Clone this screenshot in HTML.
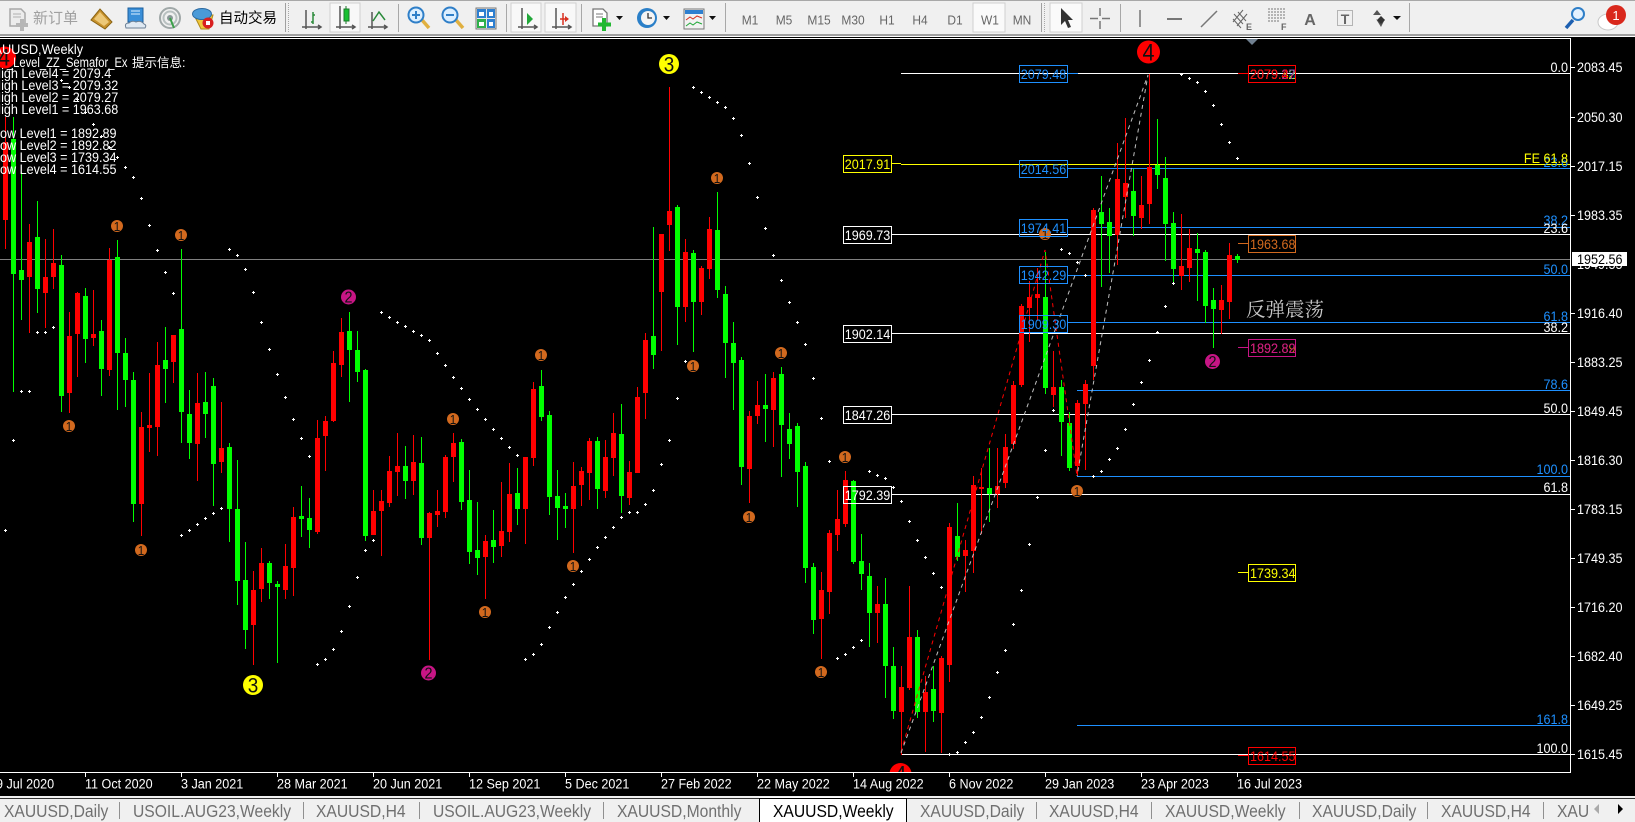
<!DOCTYPE html>
<html lang="zh">
<head>
<meta charset="utf-8">
<title>XAUUSD,Weekly</title>
<style>
html,body{margin:0;padding:0;background:#000;width:1635px;height:822px;overflow:hidden}
svg{display:block;position:absolute;left:0;top:0}
text{font-family:"Liberation Sans","Noto Sans CJK SC",sans-serif}
.s text,.e text,.m text,text.s{transform-box:fill-box;transform:translateY(.5px) scaleX(.9)}
.s text,text.s{transform-origin:0 0}
.e text{transform-origin:100% 0}
.m text{transform-origin:50% 0}
</style>
</head>
<body>
<svg xmlns="http://www.w3.org/2000/svg" width="1635" height="822" viewBox="0 0 1635 822">
<defs>
<marker id="p" markerUnits="userSpaceOnUse" markerWidth="3" markerHeight="3" refX="1.5" refY="1.5"><path d="M1 0h1v1h1v1h-1v1h-1v-1h-1v-1h1z" fill="#fff"/></marker>
<clipPath id="ca"><rect x="0" y="39" width="1570" height="733"/></clipPath>
</defs>
<rect width="1635" height="822" fill="#000"/>

<!-- toolbar -->
<rect width="1635" height="34" fill="#f0f0f0"/>
<rect width="1635" height="1" fill="#a8a8a8"/>
<rect y="34" width="1635" height="2" fill="#a0a0a0"/>
<rect y="36" width="1635" height="1" fill="#fff"/>

<!-- new order -->
<g>
<path d="M10 9h11l4 4v13H10z" fill="#ececec" stroke="#a8a8a8" stroke-width="1.5"/>
<path d="M13 14h8M13 17h8" stroke="#b0b0b0"/>
<path d="M22 19v12M16 25h12" stroke="#b6b6b6" stroke-width="4" fill="none"/>
<text x="33" y="23" font-size="15" fill="#a0a0a0">新订单</text>
</g>
<!-- gold book -->
<path d="M91 20l9-11 12 13-7 7z" fill="#c8922c" stroke="#8a6414"/>
<path d="M94 19l6-7 9 10-5 4z" fill="#ecc878"/>
<!-- blue doc + cloud -->
<path d="M128 8h15v14h-15z" fill="#3a8fd8" stroke="#1c5f9e"/>
<path d="M131 11h9M131 14h9" stroke="#dff0ff"/>
<path d="M126 28q-2-5 3-5q3-3 7-1q5-2 8 2q3 1 1 4z" fill="#dfe9f3" stroke="#6c8196"/>
<!-- radar -->
<circle cx="170" cy="18" r="10" fill="none" stroke="#a0a8a8" stroke-width="2"/>
<circle cx="170" cy="18" r="6.5" fill="none" stroke="#b8c0c0" stroke-width="2"/>
<circle cx="170" cy="18" r="3" fill="#8a9898"/>
<path d="M170 18l4 10" stroke="#3ca04a" stroke-width="2"/>
<!-- auto trade -->
<path d="M194 15l7 14h8l4-14z" fill="#f0c83c" stroke="#b08a18"/>
<ellipse cx="202" cy="14" rx="9.500" ry="5.500" fill="#4a9ad8" stroke="#2c6aa0"/>
<circle cx="208" cy="23" r="5.5" fill="#d82020"/>
<rect x="206" y="21" width="4" height="4" fill="#fff"/>
<text x="219" y="23" font-size="14.5" fill="#000">自动交易</text>
<path d="M285.500 3v29" stroke="#a0a0a0"/>
<path d="M288.500 3v29" stroke="#a8a8a8" stroke-dasharray="1 1"/>

<!-- chart type -->
<g fill="none" stroke="#555" stroke-width="1.5">
<path d="M306 10v19M302 27h18M318 25l3 2-3 2"/>
<path d="M372 12v17M368 27h18M384 25l3 2-3 2"/>
</g>
<path d="M313 12v12M311 22h2M313 15h2" stroke="#2a8a3a" fill="none" stroke-width="1.5"/>
<rect x="330" y="3" width="30" height="29" fill="#f8f8f8" stroke="#d0d0d0"/>
<path d="M340 6v23M336 27h18M352 25l3 2-3 2" fill="none" stroke="#555" stroke-width="1.5"/>
<path d="M346 6v18" stroke="#1c7a2c"/><rect x="344" y="9" width="5" height="12" fill="#18c030" stroke="#1c7a2c"/>
<path d="M373 21l6-9 6 8" fill="none" stroke="#2a8a3a" stroke-width="1.5"/>
<path d="M398.500 4v28" stroke="#a8a8a8"/>

<!-- zoom -->
<g fill="none">
<path d="M422 20l7 8" stroke="#e0b040" stroke-width="3.500"/>
<circle cx="416" cy="15" r="7.500" fill="#dcefff" stroke="#2f7fc8" stroke-width="2"/>
<path d="M412 15h8M416 11v8" stroke="#2f7fc8" stroke-width="2"/>
<path d="M456 20l7 8" stroke="#e0b040" stroke-width="3.500"/>
<circle cx="450" cy="15" r="7.500" fill="#dcefff" stroke="#2f7fc8" stroke-width="2"/>
<path d="M446 15h8" stroke="#2f7fc8" stroke-width="2"/>
</g>
<!-- tile -->
<rect x="476" y="8" width="20" height="21" fill="#e8e8e8" stroke="#777"/>
<rect x="477" y="9" width="9" height="9" fill="#2e7fd0"/><rect x="487" y="9" width="8" height="9" fill="#2e7fd0"/>
<rect x="477" y="19" width="9" height="9" fill="#2eb04a"/><rect x="487" y="19" width="8" height="9" fill="#2e7fd0"/>
<rect x="479" y="12" width="5" height="4" fill="#fff"/><rect x="489" y="12" width="4" height="4" fill="#fff"/>
<rect x="479" y="22" width="5" height="4" fill="#fff"/><rect x="489" y="22" width="4" height="4" fill="#fff"/>
<path d="M506.500 4v28" stroke="#a8a8a8"/>

<!-- autoscroll / shift -->
<rect x="511" y="3" width="30" height="29" fill="#f8f8f8" stroke="#d0d0d0"/>
<rect x="545" y="3" width="31" height="29" fill="#f8f8f8" stroke="#d0d0d0"/>
<g fill="none" stroke="#555" stroke-width="1.5">
<path d="M522 8v21M518 27h18M534 25l3 2-3 2"/>
<path d="M556 8v21M552 27h18M568 25l3 2-3 2"/>
</g>
<path d="M527 13l6 6-6 6z" fill="#22a83a"/>
<path d="M563 13v12M560 19h8" stroke="#d83020" stroke-width="1.500"/><path d="M565 16l4 3-4 3z" fill="#d83020"/>
<path d="M581.500 4v28" stroke="#a8a8a8"/>

<!-- new chart / clock / indicators -->
<path d="M593 9h10l4 4v13h-14z" fill="#fff" stroke="#777" stroke-width="1.300"/>
<path d="M596 14h7M596 17h7" stroke="#777"/>
<path d="M604 18v13M598 24.500h13" stroke="#22b832" stroke-width="4"/>
<path d="M616 16h7l-3.500 4z" fill="#111"/>
<circle cx="647" cy="18" r="10" fill="#2a7fc8"/>
<circle cx="648" cy="18" r="7" fill="#f4f4f4"/>
<path d="M648 13v5h4" stroke="#333" stroke-width="1.300" fill="none"/>
<path d="M663 16h7l-3.500 4z" fill="#111"/>
<rect x="684" y="9" width="20" height="20" fill="#f2f2f2" stroke="#777"/>
<rect x="685" y="10" width="18" height="4" fill="#2e7fd0"/>
<path d="M686 20l4-3 3 2 4-3 5 2" stroke="#d83020" fill="none"/>
<path d="M686 26l4-3 3 2 4-3 5 2" stroke="#22a83a" fill="none"/>
<path d="M709 16h7l-3.500 4z" fill="#111"/>
<path d="M725.500 3v29" stroke="#a8a8a8"/>

<!-- periods -->
<rect x="973" y="3" width="32" height="29" fill="#fafafa" stroke="#d0d0d0"/>
<g class="m" font-size="13.300" fill="#666" text-anchor="middle">
<text x="750" y="24">M1</text>
<text x="784" y="24">M5</text>
<text x="819" y="24">M15</text>
<text x="853" y="24">M30</text>
<text x="887" y="24">H1</text>
<text x="920" y="24">H4</text>
<text x="955" y="24">D1</text>
<text x="990" y="24">W1</text>
<text x="1022" y="24">MN</text>
</g>
<path d="M1041.500 3v29" stroke="#a0a0a0"/>
<path d="M1044.500 3v29" stroke="#a8a8a8" stroke-dasharray="1 1"/>

<!-- drawing tools -->
<rect x="1050" y="3" width="32" height="29" fill="#fafafa" stroke="#d0d0d0"/>
<path d="M1061 8v17l4-4 3 7 3-1-3-7h5z" fill="#333"/>
<path d="M1100 8v8M1100 21v8M1090 18.500h8M1102 18.500h8" stroke="#777" stroke-width="1.500"/>
<path d="M1120.500 4v28" stroke="#a8a8a8"/>
<path d="M1140 10v17" stroke="#777" stroke-width="1.500"/>
<path d="M1167 19h15" stroke="#777" stroke-width="2"/>
<path d="M1201 27l16-16" stroke="#777" stroke-width="1.500"/>
<path d="M1233 22l10-12M1237 26l10-12M1234 14l9 10M1238 12l8 9M1233 19l8 9" stroke="#666" fill="none"/>
<text x="1246" y="30" font-size="9" font-weight="bold" fill="#666">E</text>
<path d="M1268 9h18M1268 12h18M1268 15h18M1268 18h18M1268 21h12" stroke="#777" stroke-dasharray="2 1"/>
<text x="1281" y="30" font-size="9" font-weight="bold" fill="#666">F</text>
<text x="1310" y="25" font-size="16" font-weight="bold" text-anchor="middle" fill="#666">A</text>
<rect x="1337.500" y="10.500" width="15" height="15" fill="none" stroke="#777" stroke-dasharray="1 1"/>
<text x="1345" y="24" font-size="14" font-weight="bold" text-anchor="middle" fill="#666">T</text>
<path d="M1373 15l4-5 4 5zM1376 19l5 4 4-4-4 8z" fill="#555"/>
<path d="M1385 20l-4 4-4-4 4-4z" fill="#333"/>
<path d="M1393 16h8l-4 4z" fill="#111"/>
<path d="M1409.500 3v29" stroke="#a8a8a8"/>

<!-- search + comment -->
<path d="M1573 20l-7 8" stroke="#1c5fb0" stroke-width="3.500"/>
<circle cx="1578" cy="14" r="6" fill="#e4f2ff" stroke="#2f7fc8" stroke-width="2"/>
<ellipse cx="1608" cy="22" rx="10" ry="8" fill="#fff" stroke="#c8c8c8"/>
<circle cx="1616" cy="15" r="10" fill="#d9281c"/>
<text x="1616" y="20" font-size="13" fill="#fff" text-anchor="middle">1</text>

<!-- chart -->
<g clip-path="url(#ca)">
<g shape-rendering="crispEdges">
<rect x="0" y="259" width="1570" height="1" fill="#808080"/>
<g fill="#fff">
<rect x="901" y="73" width="669" height="1"/>
<rect x="901" y="234" width="669" height="1"/>
<rect x="901" y="333" width="669" height="1"/>
<rect x="901" y="414" width="669" height="1"/>
<rect x="901" y="494" width="669" height="1"/>
<rect x="901" y="754" width="669" height="1"/>
<rect x="892" y="234" width="9" height="1"/>
<rect x="892" y="333" width="9" height="1"/>
<rect x="892" y="414" width="9" height="1"/>
<rect x="892" y="494" width="9" height="1"/>
</g>
<rect x="901" y="164" width="669" height="1" fill="#ff0"/>
<rect x="892" y="163" width="9" height="1" fill="#ff0"/>
<g fill="#1e90ff">
<rect x="1068" y="73" width="10" height="1"/>
<rect x="1068" y="168" width="502" height="1"/>
<rect x="1068" y="227" width="502" height="1"/>
<rect x="1068" y="275" width="502" height="1"/>
<rect x="1068" y="322" width="502" height="1"/>
<rect x="1077" y="390" width="493" height="1"/>
<rect x="1077" y="476" width="493" height="1"/>
<rect x="1077" y="725" width="493" height="1"/>
</g>
</g>

<!-- candles -->
<g transform="translate(.5 0)" fill="none" shape-rendering="crispEdges">
<path stroke="#f00" stroke-width="1" d="M5 117V249M29 224V333M45 239V328M53 229V289M69 312V413M77 292V377M93 290V346M109 248V376M141 412V536M149 373V452M157 342V456M173 335V383M197 373V481M221 402V473M253 571V665M261 548V602M285 544V599M293 507V596M317 420V534M325 416V471M333 351V422M341 318V377M373 490V535M381 490V556M389 456V507M397 433V496M413 435V495M429 512V660M437 490V527M445 455V518M453 433V482M485 535V599M501 482V557M509 463V542M525 457V544M533 382V466M573 462V553M581 467V506M589 438V500M605 440V498M613 413V476M629 461V505M637 387V473M645 333V419M661 234V351M669 87V251M685 239V322M701 266V315M709 217V279M749 411V503M757 381V424M773 372V447M821 572V659M829 530V614M837 490V551M845 471V527M877 586V643M901 666V755M909 586V690M925 676V752M941 656V753M949 523V682M965 540V592M973 476V573M981 468V534M997 448V508M1005 434V488M1013 381V449M1021 304V387M1029 281V342M1037 268V320M1053 351V407M1077 400V476M1085 380V470M1093 208V380M1117 143V265M1125 118V218M1141 176V229M1149 74V224M1181 214V290M1189 229V282M1221 285V334M1229 243V319"/>
<path stroke="#f00" stroke-width="5" d="M5 142V220M29 242V277M45 277V293M53 263V277M69 336V393M77 293V334M93 334V338M109 260V370M141 427V504M149 425V428M157 365V427M173 335V362M197 403V444M221 448V462M253 590V625M261 563V589M285 566V590M293 517V568M317 438V532M325 421V436M333 363V421M341 332V365M373 511V535M381 501V511M389 471V503M397 466V472M413 462V481M429 513V538M437 511V515M445 457V512M453 443V457M485 541V557M501 531V546M509 494V532M525 457V509M533 389V458M573 486V509M581 471V485M589 441V473M605 457V491M613 433V458M629 472V498M637 397V473M645 340V393M661 234V292M669 211V225M685 252V307M701 268V302M709 229V269M749 416V469M757 405V416M773 378V410M821 590V619M829 533V592M837 519V535M845 480V524M877 604V613M901 687V712M909 637V688M925 692V712M941 658V713M949 527V665M965 550V556M973 485V551M981 487V489M997 486V494M1005 447V483M1013 385V444M1021 306V385M1029 297V308M1037 294V298M1053 387V395M1077 403V466M1085 384V404M1093 210V366M1117 179V235M1125 183V197M1141 205V218M1149 167V204M1181 266V276M1189 248V268M1221 300V310M1229 255V302"/>
<path stroke="#0f0" stroke-width="1" d="M13 117V392M21 172V320M37 201V313M61 255V412M85 288V363M101 320V396M117 240V410M125 338V407M133 372V522M165 327V403M181 249V443M189 390V459M205 372V438M213 378V506M229 443V542M237 460V605M245 542V649M269 561V599M277 581V663M301 486V537M309 498V548M349 312V402M357 331V382M365 369V541M405 446V499M421 437V545M461 439V510M469 470V564M477 502V575M493 510V563M517 468V525M541 370V421M549 411V515M557 470V540M565 493V528M597 437V509M621 404V513M653 227V369M677 205V345M693 250V352M717 192V298M725 286V378M733 322V410M741 357V485M765 374V442M781 367V477M789 413V459M797 423V507M805 462V583M813 563V634M853 480V564M861 534V590M869 563V647M885 578V698M893 647V719M917 630V718M933 666V722M957 503V561M989 448V522M1045 252V394M1061 380V456M1069 412V471M1101 176V287M1109 208V273M1133 169V236M1157 119V189M1165 157V261M1173 212V284M1197 233V301M1205 250V323M1213 288V348M1237 254V263"/>
<path stroke="#0f0" stroke-width="5" d="M13 139V274M21 270V280M37 237V289M61 265V396M85 296V339M101 331V369M117 257V353M125 353V380M133 380V504M165 360V369M181 329V412M189 414V443M205 402V414M213 386V464M229 447V509M237 509V581M245 580V630M269 563V583M277 584V587M301 516V519M309 518V530M349 331V350M357 350V372M365 370V536M405 466V481M421 463V538M461 442V502M469 500V552M477 550V558M493 540V547M517 493V509M541 386V417M549 415V497M557 496V508M565 506V509M597 441V489M621 434V496M653 336V355M677 207V307M693 253V302M717 230V290M725 294V343M733 343V363M741 360V467M765 405V409M781 374V425M789 429V444M797 426V472M805 466V568M813 567V620M853 481V562M861 561V574M869 576V613M885 604V666M893 666V711M917 637V712M933 689V711M957 536V557M989 488V494M1045 297V388M1061 387V422M1069 423V468M1101 212V224M1109 222V236M1133 191V216M1157 165V175M1165 178V224M1173 223V269M1197 249V253M1205 252V306M1213 300V309M1237 256V260"/>
</g>

<!-- zigzag -->
<g fill="none" stroke-dasharray="4 4">
<path d="M901 752L1045 250L1077 476" stroke="#f00"/>
<path d="M901 753L1148 75L1077 476" stroke="#c0c0c0"/>
</g>

<!-- SAR -->
<g transform="translate(.5 .5)">
<polyline fill="none" stroke="none" marker-start="url(#p)" marker-mid="url(#p)" marker-end="url(#p)" points="5,530 13,440 21,391 29,391 37,332 45,332 53,327 61,80 69,87 77,99 85,112 93,124 101,136 109,147 117,157 125,167 133,177 141,198 149,225 157,250 165,272 173,293 181,535 189,530 197,524 205,518 213,513 221,508 229,249 237,255 245,269 253,292 261,322 269,349 277,374 285,397 293,419 301,438 309,456 317,664 325,659 333,649 341,631 349,606 357,577 365,550 373,540 381,312 389,317 397,322 405,326 413,331 421,335 429,340 437,353 445,365 453,377 461,388 469,399 477,409 485,419 493,429 501,438 509,447 517,455 525,659 533,654 541,644 549,627 557,612 565,597 573,584 581,571 589,559 597,547 605,537 613,527 621,517 629,512 637,512 645,504 653,490 661,464 669,440 677,398 685,361 693,87 701,92 709,97 717,102 725,107 733,118 741,135 749,163 757,197 765,228 773,255 781,280 789,302 797,322 805,344 813,378 821,418 829,461 837,658 845,654 853,647 861,640 869,471 877,475 885,478 893,487 901,501 909,521 917,540 925,557 933,573 941,587 949,754 957,752 965,742 973,732 981,717 989,697 997,672 1005,650 1013,624 1021,590 1029,544 1037,497 1045,450 1053,410 1061,249 1069,253 1077,262 1085,275 1093,476 1101,471 1109,459 1117,448 1125,429 1133,404 1141,382 1149,360 1157,332 1165,306 1173,283 1181,74 1189,78 1197,82 1205,91 1213,105 1221,124 1229,142 1237,158"/>
</g>

<!-- semafor -->
<g class="m" text-anchor="middle" fill="#111">
<g font-size="13">
<circle cx="117" cy="226" r="6" fill="#d2691e"/><text x="117" y="230.500">1</text>
<circle cx="181" cy="235" r="6" fill="#d2691e"/><text x="181" y="239.500">1</text>
<circle cx="69" cy="426" r="6" fill="#d2691e"/><text x="69" y="430.500">1</text>
<circle cx="141" cy="550" r="6" fill="#d2691e"/><text x="141" y="554.500">1</text>
<circle cx="541" cy="355" r="6" fill="#d2691e"/><text x="541" y="359.500">1</text>
<circle cx="453" cy="419" r="6" fill="#d2691e"/><text x="453" y="423.500">1</text>
<circle cx="485" cy="612" r="6" fill="#d2691e"/><text x="485" y="616.500">1</text>
<circle cx="573" cy="566" r="6" fill="#d2691e"/><text x="573" y="570.500">1</text>
<circle cx="717" cy="178" r="6" fill="#d2691e"/><text x="717" y="182.500">1</text>
<circle cx="693" cy="366" r="6" fill="#d2691e"/><text x="693" y="370.500">1</text>
<circle cx="781" cy="353" r="6" fill="#d2691e"/><text x="781" y="357.500">1</text>
<circle cx="749" cy="517" r="6" fill="#d2691e"/><text x="749" y="521.500">1</text>
<circle cx="845" cy="457" r="6" fill="#d2691e"/><text x="845" y="461.500">1</text>
<circle cx="821" cy="672" r="6" fill="#d2691e"/><text x="821" y="676.500">1</text>
<circle cx="1045" cy="234" r="6" fill="#d2691e"/><text x="1045" y="238.500">1</text>
<circle cx="1077" cy="491" r="6" fill="#d2691e"/><text x="1077" y="495.500">1</text>
</g>
<g font-size="16">
<circle cx="348.500" cy="297" r="7.500" fill="#c71585"/><text x="348.500" y="302">2</text>
<circle cx="428.500" cy="673" r="7.500" fill="#c71585"/><text x="428.500" y="678">2</text>
<circle cx="1212.500" cy="361.500" r="7.500" fill="#c71585"/><text x="1212.500" y="366.500">2</text>
</g>
<g font-size="21">
<circle cx="669" cy="64" r="10" fill="#ff0"/><text x="669" y="71">3</text>
<circle cx="253" cy="685" r="10" fill="#ff0"/><text x="253" y="692">3</text>
</g>
<g font-size="24">
<circle cx="1148.500" cy="52" r="11.500" fill="#f00"/><text x="1148.500" y="60">4</text>
<circle cx="5" cy="57.500" r="11" fill="#f00"/><text x="4" y="65">4</text>
<circle cx="900.500" cy="774" r="11" fill="#f00"/><text x="900.500" y="782">4</text>
</g>
</g>
</g>

<!-- axis frame -->
<g shape-rendering="crispEdges" fill="#fff">
<rect y="38" width="1571" height="1"/>
<rect y="772" width="1571" height="1"/>
<rect x="1570" y="38" width="1" height="735"/>
<rect x="1571" y="67" width="4" height="1"/><rect x="1571" y="117" width="4" height="1"/><rect x="1571" y="166" width="4" height="1"/><rect x="1571" y="215" width="4" height="1"/><rect x="1571" y="313" width="4" height="1"/><rect x="1571" y="362" width="4" height="1"/><rect x="1571" y="411" width="4" height="1"/><rect x="1571" y="460" width="4" height="1"/><rect x="1571" y="509" width="4" height="1"/><rect x="1571" y="558" width="4" height="1"/><rect x="1571" y="607" width="4" height="1"/><rect x="1571" y="656" width="4" height="1"/><rect x="1571" y="705" width="4" height="1"/><rect x="1571" y="754" width="4" height="1"/>
<rect x="85" y="773" width="1" height="4"/><rect x="181" y="773" width="1" height="4"/><rect x="277" y="773" width="1" height="4"/><rect x="373" y="773" width="1" height="4"/><rect x="469" y="773" width="1" height="4"/><rect x="565" y="773" width="1" height="4"/><rect x="661" y="773" width="1" height="4"/><rect x="757" y="773" width="1" height="4"/><rect x="853" y="773" width="1" height="4"/><rect x="949" y="773" width="1" height="4"/><rect x="1045" y="773" width="1" height="4"/><rect x="1141" y="773" width="1" height="4"/><rect x="1237" y="773" width="1" height="4"/>
</g>
<path d="M1246 39h12l-6 6z" fill="#708090"/>

<!-- price axis -->
<g class="s" font-size="14" fill="#fff">
<text x="1577" y="71.500">2083.45</text>
<text x="1577" y="121.500">2050.30</text>
<text x="1577" y="170.500">2017.15</text>
<text x="1577" y="219.500">1983.35</text>
<text x="1577" y="268.500">1949.55</text>
<text x="1577" y="317.500">1916.40</text>
<text x="1577" y="366.500">1883.25</text>
<text x="1577" y="415.500">1849.45</text>
<text x="1577" y="464.500">1816.30</text>
<text x="1577" y="513.500">1783.15</text>
<text x="1577" y="562.500">1749.35</text>
<text x="1577" y="611.500">1716.20</text>
<text x="1577" y="660.500">1682.40</text>
<text x="1577" y="709.500">1649.25</text>
<text x="1577" y="758.500">1615.45</text>
</g>
<rect x="1572" y="252" width="55" height="14" fill="#fff"/>
<text class="s" x="1577" y="263.500" font-size="14" fill="#000">1952.56</text>

<!-- time axis -->
<g class="s" font-size="14" fill="#fff">
<text x="-11" y="788">19 Jul 2020</text>
<text x="85" y="788">11 Oct 2020</text>
<text x="181" y="788">3 Jan 2021</text>
<text x="277" y="788">28 Mar 2021</text>
<text x="373" y="788">20 Jun 2021</text>
<text x="469" y="788">12 Sep 2021</text>
<text x="565" y="788">5 Dec 2021</text>
<text x="661" y="788">27 Feb 2022</text>
<text x="757" y="788">22 May 2022</text>
<text x="853" y="788">14 Aug 2022</text>
<text x="949" y="788">6 Nov 2022</text>
<text x="1045" y="788">29 Jan 2023</text>
<text x="1141" y="788">23 Apr 2023</text>
<text x="1237" y="788">16 Jul 2023</text>
</g>

<!-- fib labels -->
<g class="e" font-size="14" text-anchor="end">
<text x="1568" y="71.500" fill="#fff">0.0</text>
<text x="1568" y="166.500" fill="#1e90ff">23.6</text>
<text x="1568" y="162.500" fill="#ff0">FE 61.8</text>
<text x="1568" y="224.500" fill="#1e90ff">38.2</text>
<text x="1568" y="232.500" fill="#fff">23.6</text>
<text x="1568" y="273.500" fill="#1e90ff">50.0</text>
<text x="1568" y="320.500" fill="#1e90ff">61.8</text>
<text x="1568" y="331.500" fill="#fff">38.2</text>
<text x="1568" y="388.500" fill="#1e90ff">78.6</text>
<text x="1568" y="412.500" fill="#fff">50.0</text>
<text x="1568" y="473.500" fill="#1e90ff">100.0</text>
<text x="1568" y="491.500" fill="#fff">61.8</text>
<text x="1568" y="723.500" fill="#1e90ff">161.8</text>
<text x="1568" y="752.500" fill="#fff">100.0</text>
</g>

<!-- label boxes -->
<g fill="none" shape-rendering="crispEdges">
<rect x="843.500" y="155.500" width="48" height="17" stroke="#ff0"/>
<rect x="843.500" y="226.500" width="48" height="17" stroke="#fff"/>
<rect x="843.500" y="325.500" width="48" height="17" stroke="#fff"/>
<rect x="843.500" y="406.500" width="48" height="17" stroke="#fff"/>
<rect x="843.500" y="486.500" width="48" height="17" stroke="#fff"/>
<rect x="1019.500" y="65.500" width="48" height="17" stroke="#1e90ff"/>
<rect x="1019.500" y="160.500" width="48" height="17" stroke="#1e90ff"/>
<rect x="1019.500" y="219.500" width="48" height="17" stroke="#1e90ff"/>
<rect x="1019.500" y="266.500" width="48" height="17" stroke="#1e90ff"/>
<rect x="1019.500" y="315.500" width="48" height="17" stroke="#1e90ff"/>
<rect x="1248.500" y="65.500" width="47" height="17" stroke="#f00"/>
<rect x="1248.500" y="235.500" width="47" height="17" stroke="#d2691e"/>
<rect x="1248.500" y="339.500" width="47" height="17" stroke="#c71585"/>
<rect x="1248.500" y="564.500" width="47" height="17" stroke="#ff0"/>
<rect x="1248.500" y="747.500" width="47" height="17" stroke="#f00"/>
</g>
<g shape-rendering="crispEdges">
<rect x="1238" y="73" width="10" height="1" fill="#f00"/>
<rect x="1238" y="243" width="10" height="1" fill="#d2691e"/>
<rect x="1238" y="347" width="10" height="1" fill="#c71585"/>
<rect x="1238" y="572" width="10" height="1" fill="#ff0"/>
<rect x="1238" y="755" width="10" height="1" fill="#f00"/>
</g>
<g class="m" font-size="14" text-anchor="middle">
<text x="867.500" y="168.500" fill="#ff0">2017.91</text>
<text x="867.500" y="239.500" fill="#fff">1969.73</text>
<text x="867.500" y="338.500" fill="#fff">1902.14</text>
<text x="867.500" y="419.500" fill="#fff">1847.26</text>
<text x="867.500" y="499.500" fill="#fff">1792.39</text>
<text x="1043.500" y="78.500" fill="#1e90ff">2079.48</text>
<text x="1043.500" y="173.500" fill="#1e90ff">2014.56</text>
<text x="1043.500" y="232.500" fill="#1e90ff">1974.41</text>
<text x="1043.500" y="279.500" fill="#1e90ff">1942.29</text>
<text x="1043.500" y="328.500" fill="#1e90ff">1909.30</text>
</g>
<g class="s" font-size="14">
<text x="1250" y="78.500" fill="#ff0">2079.32</text>
<text x="1250" y="78.500" fill="#c71585">2079.27</text>
<text x="1250" y="78.500" fill="#1e90ff" opacity=".5">2079.48</text>
<text x="1250" y="78.500" fill="#f00">2079.4</text>
<text x="1250" y="248.500" fill="#d2691e">1963.68</text>
<text x="1250" y="352.500" fill="#d2691e">1892.89</text>
<text x="1250" y="352.500" fill="#c71585">1892.82</text>
<text x="1250" y="577.500" fill="#ff0">1739.34</text>
<text x="1250" y="760.500" fill="#f00">1614.55</text>
</g>
<text x="1246" y="316" font-size="19.500" fill="#c8c8c8" style="font-family:'Liberation Serif','Noto Serif CJK SC',serif">反弹震荡</text>

<!-- info text -->
<g class="s" font-size="14" fill="#fff">
<text x="-15" y="53.500" textLength="109" lengthAdjust="spacingAndGlyphs">XAUUSD,Weekly</text>
<text x="7" y="66.500" textLength="134" lengthAdjust="spacingAndGlyphs">_Level_ZZ_Semafor_Ex</text>
<text x="-8" y="77.500">High Level4 = 2079.4</text>
<text x="-8" y="89.500">High Level3 = 2079.32</text>
<text x="-8" y="101.500">High Level2 = 2079.27</text>
<text x="-8" y="113.500">High Level1 = 1963.68</text>
<text x="-7" y="137.500">Low Level1 = 1892.89</text>
<text x="-7" y="149.500">Low Level2 = 1892.82</text>
<text x="-7" y="161.500">Low Level3 = 1739.34</text>
<text x="-7" y="173.500">Low Level4 = 1614.55</text>
</g>
<text x="132" y="67" font-size="12.500" fill="#fff">提示信息:</text>

<!-- tabs -->
<rect y="796" width="1635" height="26" fill="#f0f0f0"/>
<rect y="798" width="1635" height="1" fill="#333"/>
<rect x="759" y="797" width="148" height="25" fill="#fff"/>
<path d="M759.500 822V798.500H906.500V822" fill="none" stroke="#000"/>
<g stroke="#909090" shape-rendering="crispEdges">
<path d="M119.500 802v17M303.500 802v17M419.500 802v17M603.500 802v17M1036.500 802v17M1151.500 802v17M1299.500 802v17M1427.500 802v17M1543.500 802v17"/>
</g>
<g class="s" font-size="17.400" fill="#707070">
<text x="4" y="816.500">XAUUSD,Daily</text>
<text x="133" y="816.500">USOIL.AUG23,Weekly</text>
<text x="316" y="816.500">XAUUSD,H4</text>
<text x="433" y="816.500">USOIL.AUG23,Weekly</text>
<text x="617" y="816.500">XAUUSD,Monthly</text>
<text x="773" y="816.500" fill="#000">XAUUSD,Weekly</text>
<text x="920" y="816.500">XAUUSD,Daily</text>
<text x="1049" y="816.500">XAUUSD,H4</text>
<text x="1165" y="816.500">XAUUSD,Weekly</text>
<text x="1312" y="816.500">XAUUSD,Daily</text>
<text x="1441" y="816.500">XAUUSD,H4</text>
<text x="1557" y="816.500">XAU</text>
</g>
<rect x="1590" y="799" width="45" height="23" fill="#f0f0f0"/>
<path d="M1599 804v10l-5-5z" fill="#aaa"/>
<path d="M1618 804v10l5-5z" fill="#000"/>
</svg>
</body>
</html>
